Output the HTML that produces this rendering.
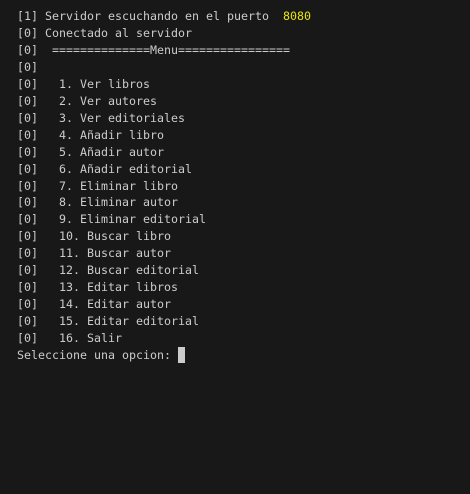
<!DOCTYPE html>
<html><head><meta charset="utf-8"><style>
html,body{margin:0;padding:0;background:#181818;width:470px;height:494px;overflow:hidden}
pre{margin:0;position:absolute;left:17px;top:8px;font-family:"DejaVu Sans Mono","Liberation Mono",monospace;font-size:11.63px;line-height:16.95px;color:#cccccc;letter-spacing:0}
.y{color:#e5e510}
.c{display:inline-block;width:7px;height:16px;background:#cccccc;vertical-align:-4px}
</style></head><body><pre>[1] Servidor escuchando en el puerto  <span class="y">8080</span>
[0] Conectado al servidor
[0]  ==============Menu================
[0]
[0]   1. Ver libros
[0]   2. Ver autores
[0]   3. Ver editoriales
[0]   4. Añadir libro
[0]   5. Añadir autor
[0]   6. Añadir editorial
[0]   7. Eliminar libro
[0]   8. Eliminar autor
[0]   9. Eliminar editorial
[0]   10. Buscar libro
[0]   11. Buscar autor
[0]   12. Buscar editorial
[0]   13. Editar libros
[0]   14. Editar autor
[0]   15. Editar editorial
[0]   16. Salir
Seleccione una opcion: <span class="c"></span></pre></body></html>
